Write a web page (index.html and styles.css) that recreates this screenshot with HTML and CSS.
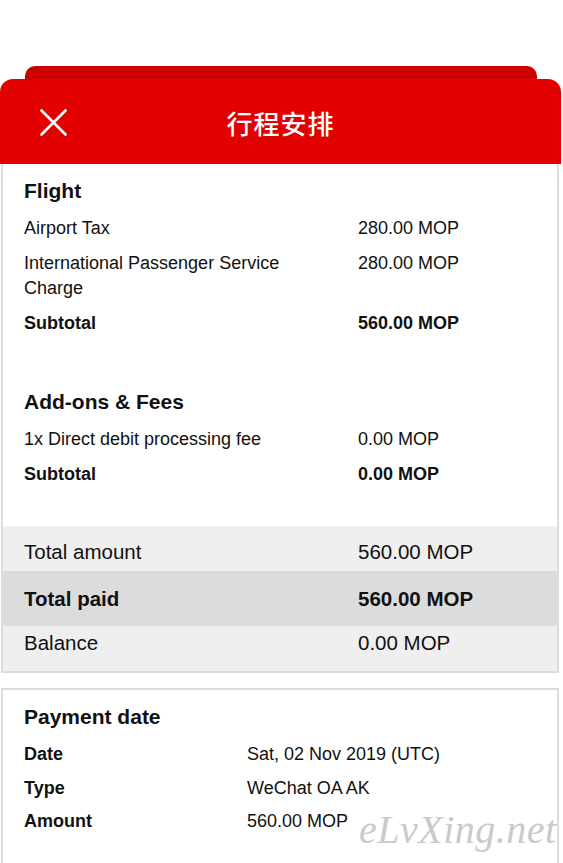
FILE: index.html
```html
<!DOCTYPE html>
<html lang="zh">
<head>
<meta charset="utf-8">
<title>行程安排</title>
<link rel="stylesheet" href="styles.css">
</head>
<body>
<div class="page">
  <div class="tab"></div>
  <header class="header">
    <svg class="close" width="27" height="27" viewBox="0 0 27 27" aria-hidden="true">
      <path d="M1.5 1.5 L25.5 25.5 M25.5 1.5 L1.5 25.5" stroke="#fff" stroke-width="2.6" stroke-linecap="round" fill="none"/>
    </svg>
    <h1 class="title">行程安排</h1>
  </header>

  <div class="card card-main">
    <section class="section">
      <h2 class="heading">Flight</h2>
      <div class="rows rows-wide">
        <span>Airport Tax</span><span>280.00 MOP</span>
        <span>International Passenger Service Charge</span><span>280.00 MOP</span>
        <strong>Subtotal</strong><strong>560.00 MOP</strong>
      </div>
    </section>
    <section class="section">
      <h2 class="heading">Add-ons &amp; Fees</h2>
      <div class="rows rows-wide">
        <span>1x Direct debit processing fee</span><span>0.00 MOP</span>
        <strong>Subtotal</strong><strong>0.00 MOP</strong>
      </div>
    </section>
    <div class="summary">
      <div class="sum-row sum-first"><span>Total amount</span><span>560.00 MOP</span></div>
      <div class="sum-row sum-paid"><strong>Total paid</strong><strong>560.00 MOP</strong></div>
      <div class="sum-row sum-last"><span>Balance</span><span>0.00 MOP</span></div>
    </div>
  </div>

  <div class="card card-pay">
    <h2 class="heading">Payment date</h2>
    <div class="rows rows-narrow">
      <strong>Date</strong><span>Sat, 02 Nov 2019 (UTC)</span>
      <strong>Type</strong><span>WeChat OA AK</span>
      <strong>Amount</strong><span>560.00 MOP</span>
    </div>
    <div class="watermark">eLvXing.net</div>
  </div>
</div>
</body>
</html>
```

FILE: styles.css
```css
html, body {
  margin: 0;
  padding: 0;
  background: #ffffff;
}

body {
  font-family: "Liberation Sans", Arial, "Noto Sans CJK SC", sans-serif;
  color: #111111;
  overflow: hidden;
}

.page {
  width: 563px;
  padding-top: 66px;
}

.tab {
  margin-left: 25px;
  width: 512px;
  height: 13px;
  background: #cd0000;
  border-radius: 10px 10px 0 0;
}

.header {
  width: 561px;
  height: 85px;
  background: #e30000;
  border-radius: 13px 13px 0 0;
  display: flex;
  align-items: center;
  justify-content: center;
  position: relative;
}

.close {
  position: absolute;
  left: 40px;
  top: 30px;
}

.title {
  margin: 0;
  color: #ffffff;
  font-family: "Noto Sans CJK SC", "Noto Sans CJK TC", sans-serif;
  font-weight: 500;
  font-size: 26px;
  line-height: 30px;
  letter-spacing: 1px;
  padding-top: 2px;
}

.card {
  margin-left: 1px;
  width: 558px;
  box-sizing: border-box;
  border: 2px solid #dcdcdc;
  background: #ffffff;
}

.card-main {
  border-top: none;
}

.section {
  padding: 12px 21px 39px;
}

.heading {
  margin: 0 0 10px;
  font-size: 21px;
  line-height: 30px;
  font-weight: bold;
}

.rows {
  display: grid;
  row-gap: 10px;
  font-size: 18px;
  line-height: 25px;
}

.rows strong {
  font-weight: bold;
}

.rows-wide {
  grid-template-columns: 334px 1fr;
}

.rows-wide span:nth-child(odd) {
  padding-right: 60px;
}

.rows-narrow {
  grid-template-columns: 223px 1fr;
  row-gap: 8.5px;
}

.summary {
  background: #efefef;
  font-size: 20.5px;
  line-height: 25px;
}

.sum-row {
  display: grid;
  grid-template-columns: 334px 1fr;
  padding-left: 21px;
}

.sum-first {
  padding-top: 13px;
  padding-bottom: 7px;
}

.sum-paid {
  background: #dcdcdc;
  padding-top: 15px;
  padding-bottom: 15px;
}

.sum-last {
  padding-top: 4px;
  padding-bottom: 16px;
}

.card-pay {
  margin-top: 15px;
  padding: 12px 21px 40px;
  position: relative;
  height: 200px;
}

.watermark {
  position: absolute;
  left: 356px;
  top: 118px;
  font-family: "Liberation Serif", serif;
  font-style: italic;
  font-size: 40px;
  line-height: 44px;
  color: #cacaca;
  letter-spacing: 0.5px;
}
```
